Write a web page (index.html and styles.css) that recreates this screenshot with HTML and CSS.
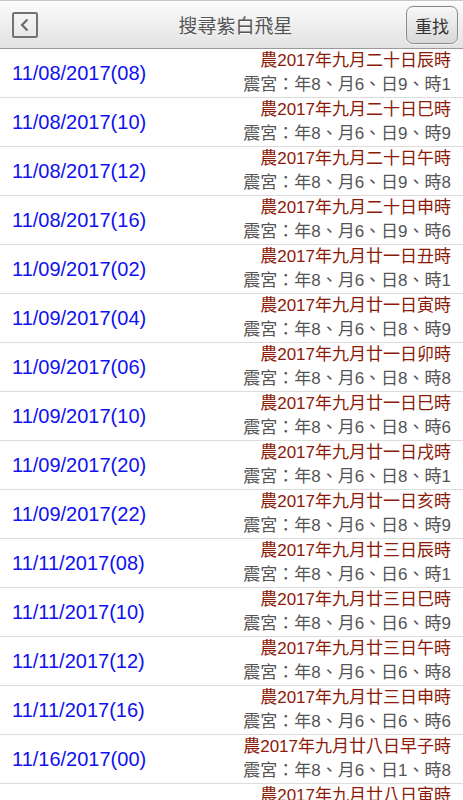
FILE: index.html
```html
<html>
    <head>
        <title>搜尋紫白飛星</title>
        <link rel="stylesheet" href="styles.css">
    </head>
    <body>
        <div class="topbar">
            <div class="back">
                <svg width="26" height="26" viewBox="0 0 26 26">
                    <rect x="1" y="1" width="24" height="24" rx="1.5" fill="none" stroke="#727272" stroke-width="2"/>
                    <path d="M15.5 7.5 L10 13 L15.5 18.5" fill="none" stroke="#6a6a6a" stroke-width="2.2"/>
                </svg>
            </div>
            <div class="title">搜尋紫白飛星</div>
            <div class="reset"><span>重找</span></div>
        </div>

        <!-- result list -->
        <div id="results"></div>

        <script>
        var results = [
            ["11/08/2017(08)", "農2017年九月二十日辰時", "震宮：年8、月6、日9、時1"],
            ["11/08/2017(10)", "農2017年九月二十日巳時", "震宮：年8、月6、日9、時9"],
            ["11/08/2017(12)", "農2017年九月二十日午時", "震宮：年8、月6、日9、時8"],
            ["11/08/2017(16)", "農2017年九月二十日申時", "震宮：年8、月6、日9、時6"],
            ["11/09/2017(02)", "農2017年九月廿一日丑時", "震宮：年8、月6、日8、時1"],
            ["11/09/2017(04)", "農2017年九月廿一日寅時", "震宮：年8、月6、日8、時9"],
            ["11/09/2017(06)", "農2017年九月廿一日卯時", "震宮：年8、月6、日8、時8"],
            ["11/09/2017(10)", "農2017年九月廿一日巳時", "震宮：年8、月6、日8、時6"],
            ["11/09/2017(20)", "農2017年九月廿一日戌時", "震宮：年8、月6、日8、時1"],
            ["11/09/2017(22)", "農2017年九月廿一日亥時", "震宮：年8、月6、日8、時9"],
            ["11/11/2017(08)", "農2017年九月廿三日辰時", "震宮：年8、月6、日6、時1"],
            ["11/11/2017(10)", "農2017年九月廿三日巳時", "震宮：年8、月6、日6、時9"],
            ["11/11/2017(12)", "農2017年九月廿三日午時", "震宮：年8、月6、日6、時8"],
            ["11/11/2017(16)", "農2017年九月廿三日申時", "震宮：年8、月6、日6、時6"],
            ["11/16/2017(00)", "農2017年九月廿八日早子時", "震宮：年8、月6、日1、時8"],
            ["11/16/2017(04)", "農2017年九月廿八日寅時", "震宮：年8、月6、日1、時6"]
        ];

        var list = document.getElementById("results");
        for (var i = 0; i < results.length; i++){
            var row = document.createElement("div");
            row.className = "row";

            var date = document.createElement("div");
            date.className = "date";
            date.innerText = results[i][0];
            row.appendChild(date);

            var info = document.createElement("div");
            info.className = "info";
            var lunar = document.createElement("div");
            lunar.className = "lunar";
            lunar.innerText = results[i][1];
            var star = document.createElement("div");
            star.className = "star";
            star.innerText = results[i][2];
            info.appendChild(lunar);
            info.appendChild(star);
            row.appendChild(info);

            list.appendChild(row);
        }
        </script>
    </body>
</html>
```

FILE: styles.css
```css
body{
    margin: 0;
    background: white;
    font-family: 'Liberation Sans', 'Noto Sans CJK TC', sans-serif;
}

.topbar{
    display: grid;
    grid-template-columns: 1fr auto 1fr;
    align-items: center;
    height: 49px;
    padding: 0 4px 0 12px;
    background: linear-gradient(#fcfcfc, #e2e2e2);
    border-top: 1px solid #c8c8c8;
    border-bottom: 1px solid #9a9a9a;
    box-sizing: border-box;
}

.back{
    display: flex;
    align-items: center;
}

.back svg{
    display: block;
}

.title{
    font-size: 19px;
    color: #555;
    font-family: 'Noto Sans CJK TC', sans-serif;
    text-shadow: 0 1px 0 white;
}

.reset{
    justify-self: end;
    padding: 1px;
    border-radius: 8px;
    background: #f4f4f4;
}

.reset span{
    display: block;
    width: 52px;
    height: 38px;
    line-height: 38px;
    text-align: center;
    font-size: 17px;
    color: #333;
    font-family: 'Noto Sans CJK TC', sans-serif;
    border: 1px solid #8a8a8a;
    border-radius: 7px;
    box-sizing: border-box;
    background: linear-gradient(#f7f7f7, #d8d8d8);
}

.row{
    display: flex;
    justify-content: space-between;
    align-items: center;
    padding: 0 12px;
    border-bottom: 1px solid #dcdcdc;
}

.date{
    font-size: 20px;
    color: #1010f0;
}

.info{
    text-align: right;
    font-size: 17px;
    line-height: 24px;
}

.lunar{
    color: #8c1a08;
}

.star{
    color: #555;
}
```
